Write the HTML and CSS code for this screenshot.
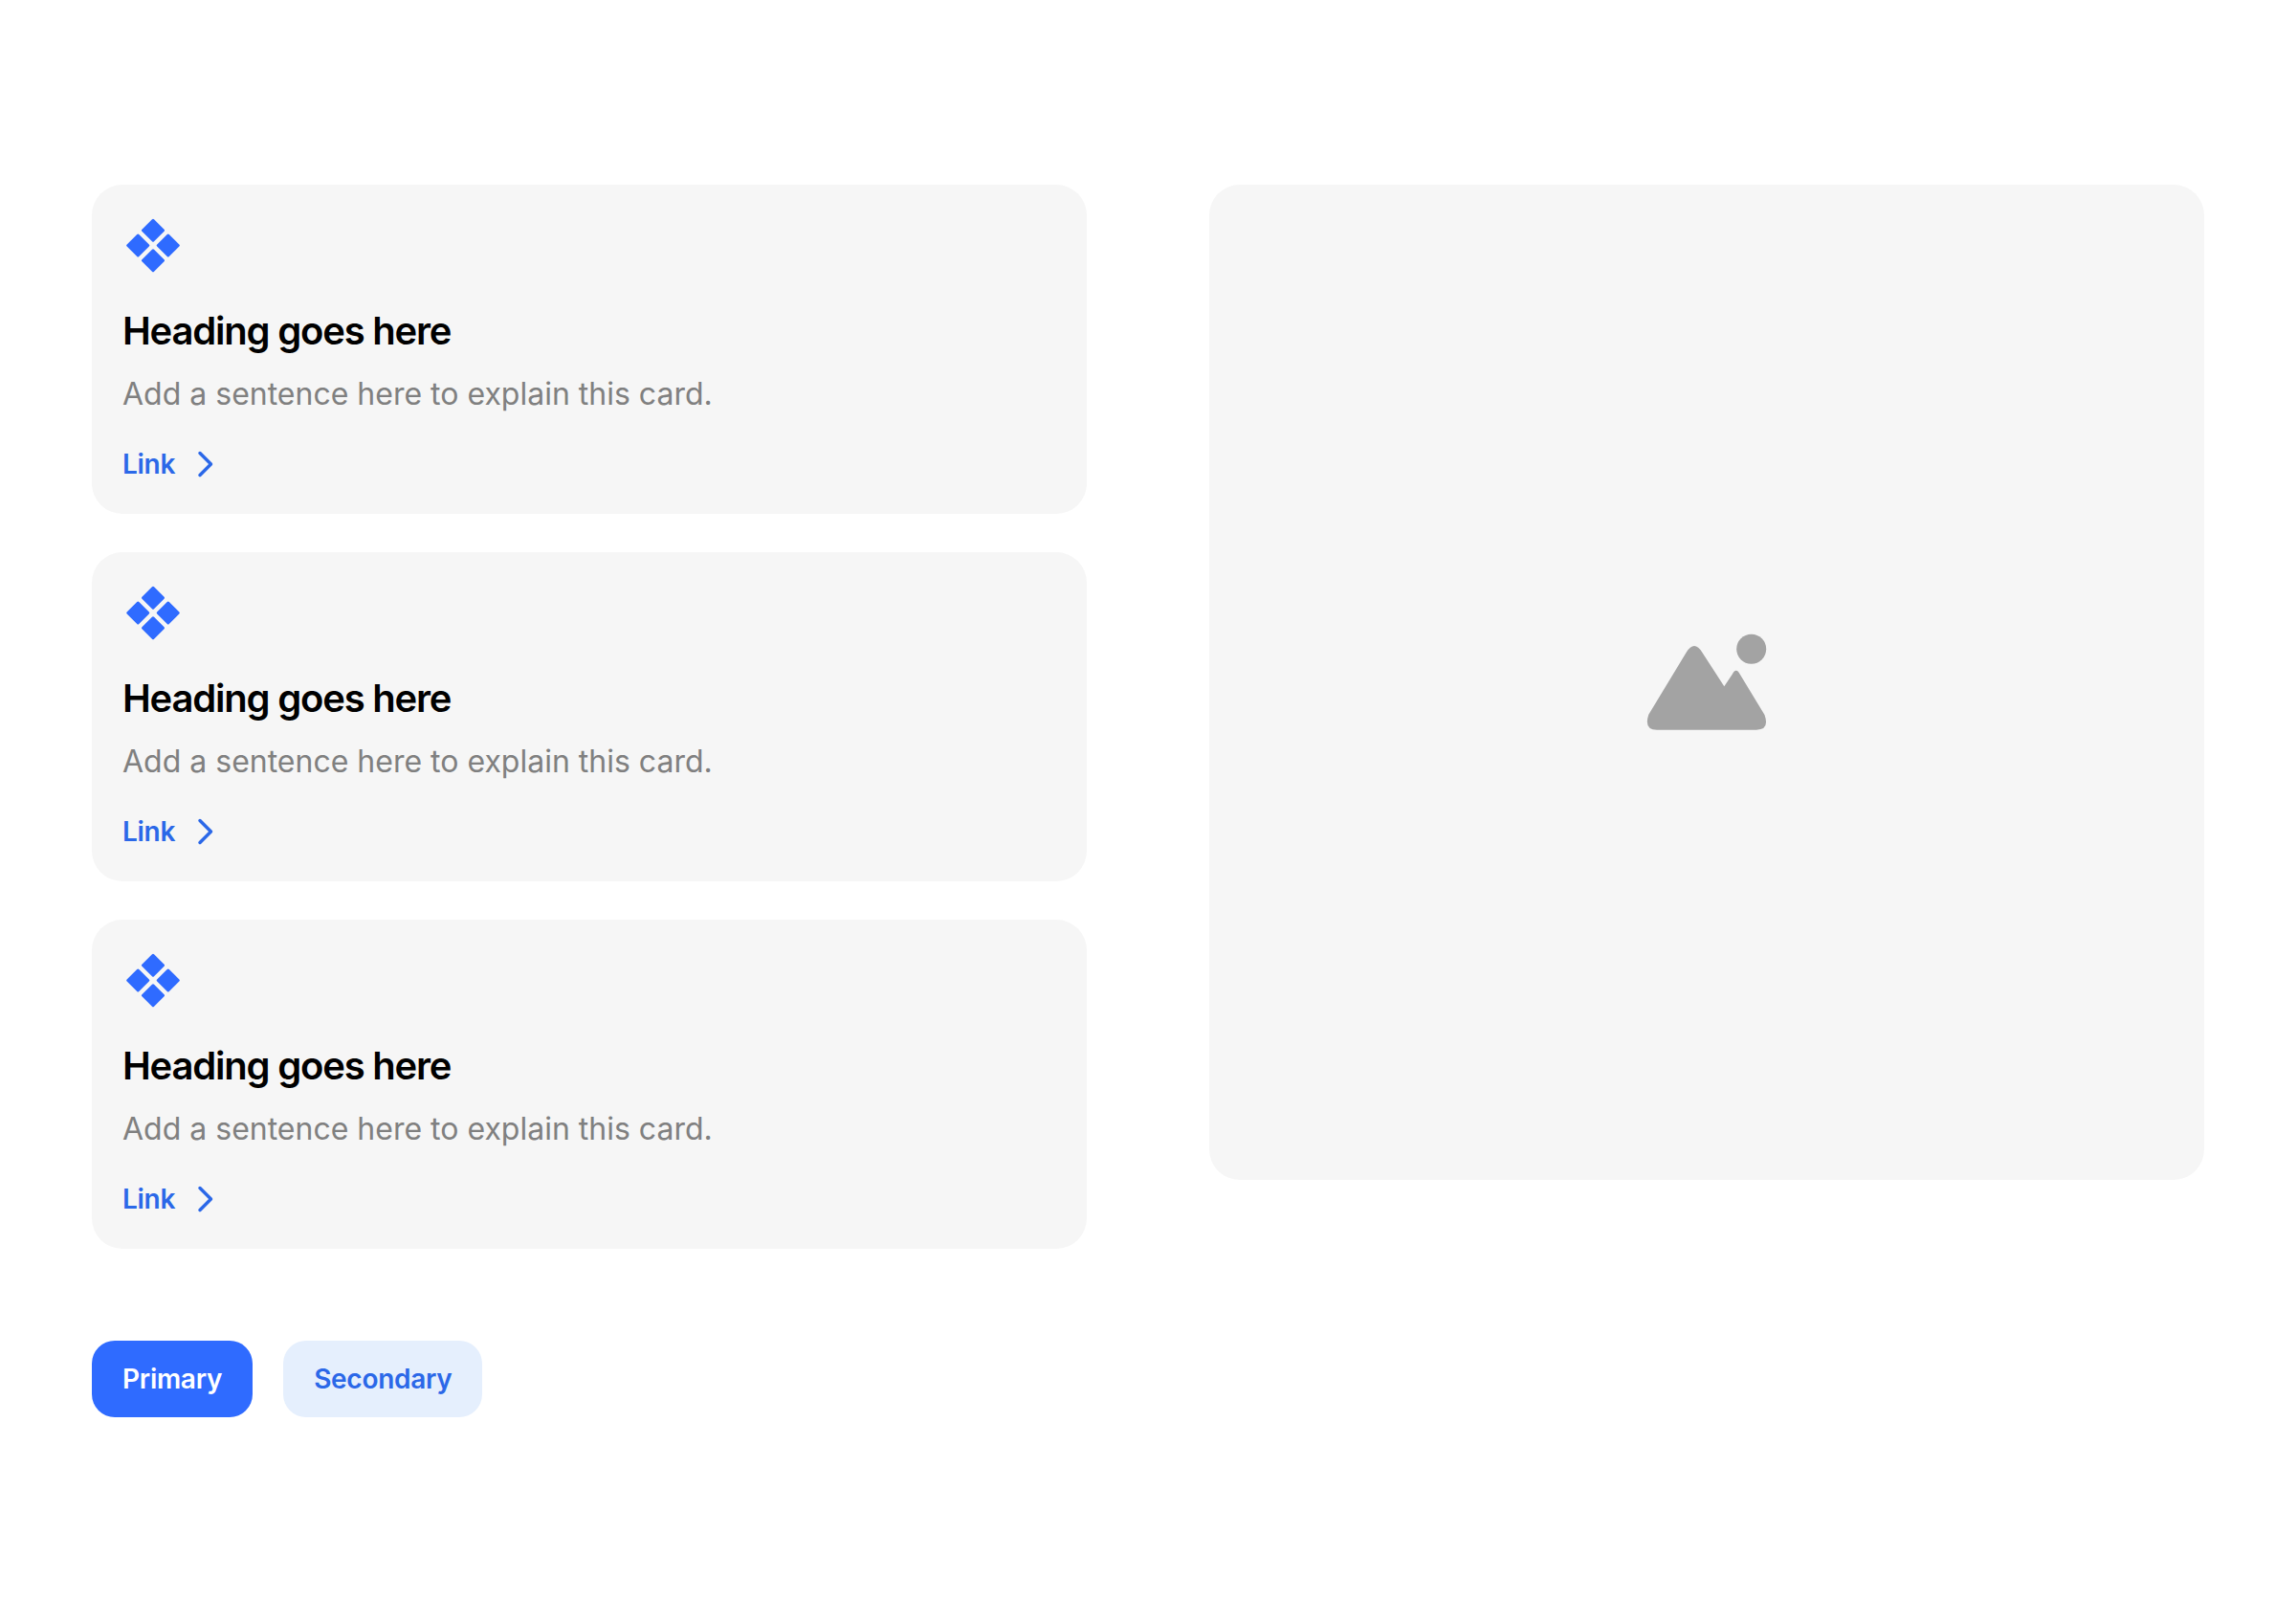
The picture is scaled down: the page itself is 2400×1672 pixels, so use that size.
FILE: index.html
```html
<!DOCTYPE html>
<html lang="en">
<head>
<meta charset="utf-8">
<title>Cards</title>
<link rel="stylesheet" href="styles.css">
</head>
<body>
<main class="page">
  <section class="left">
    <div class="cards">
      <article class="card">
        <svg class="icon" viewBox="0 0 64 64"><path d="M32 5.300 L42.700 16 L32 26.700 L21.300 16Z M48 21.300 L58.700 32 L48 42.700 L37.300 32Z M32 37.300 L42.700 48 L32 58.700 L21.300 48Z M16 21.300 L26.700 32 L16 42.700 L5.300 32Z"/></svg>
        <h2 class="title">Heading goes here</h2>
        <p class="text">Add a sentence here to explain this card.</p>
        <a class="link">Link<svg class="chev" viewBox="0 0 32 32"><path d="M10 4.500 L21.500 16 L10 27.500"/></svg></a>
      </article>
      <article class="card">
        <svg class="icon" viewBox="0 0 64 64"><path d="M32 5.300 L42.700 16 L32 26.700 L21.300 16Z M48 21.300 L58.700 32 L48 42.700 L37.300 32Z M32 37.300 L42.700 48 L32 58.700 L21.300 48Z M16 21.300 L26.700 32 L16 42.700 L5.300 32Z"/></svg>
        <h2 class="title">Heading goes here</h2>
        <p class="text">Add a sentence here to explain this card.</p>
        <a class="link">Link<svg class="chev" viewBox="0 0 32 32"><path d="M10 4.500 L21.500 16 L10 27.500"/></svg></a>
      </article>
      <article class="card">
        <svg class="icon" viewBox="0 0 64 64"><path d="M32 5.300 L42.700 16 L32 26.700 L21.300 16Z M48 21.300 L58.700 32 L48 42.700 L37.300 32Z M32 37.300 L42.700 48 L32 58.700 L21.300 48Z M16 21.300 L26.700 32 L16 42.700 L5.300 32Z"/></svg>
        <h2 class="title">Heading goes here</h2>
        <p class="text">Add a sentence here to explain this card.</p>
        <a class="link">Link<svg class="chev" viewBox="0 0 32 32"><path d="M10 4.500 L21.500 16 L10 27.500"/></svg></a>
      </article>
    </div>
    <div class="actions">
      <a class="btn btn-primary">Primary</a>
      <a class="btn btn-secondary">Secondary</a>
    </div>
  </section>
  <section class="media">
    <svg class="placeholder" viewBox="0 0 128 106">
      <circle cx="110.700" cy="18.300" r="15.500"/>
      <path d="M42.700 21.700 Q51 8.300 59.300 21.700 L82.300 57.300 L90.500 45 Q94.700 36.400 99 45 L124.500 87 Q130 102.700 116 102.700 L12 102.700 Q-2 102.700 3.300 86.700Z"/>
    </svg>
  </section>
</main>
</body>
</html>
```
FILE: styles.css
```css
* { box-sizing: border-box; }
html, body { margin: 0; background: #fff; }
body { font-family: Inter, "Liberation Sans", sans-serif; }
.page {
  display: grid;
  grid-template-columns: 1040px 1040px;
  gap: 128px;
  padding: 193px 96px 0;
  align-items: start;
}
.cards { display: flex; flex-direction: column; gap: 40px; }
.card {
  background: #f6f6f6;
  border-radius: 32px;
  padding: 32px;
  height: 344px;
  display: flex;
  flex-direction: column;
  align-items: flex-start;
}
.icon { width: 64px; height: 64px; fill: #2f6bff; stroke: #2f6bff; stroke-width: 3; stroke-linejoin: round; display: block; }
.title { margin: 34px 0 0; font-size: 40px; line-height: 48px; font-weight: 600; letter-spacing: -1.2px; color: #000; }
.text { margin: 18px 0 0; font-size: 32px; line-height: 48px; font-weight: 400; color: #808080; }
.link { margin-top: 29px; display: flex; align-items: center; gap: 16px; font-size: 28px; line-height: 40px; font-weight: 600; letter-spacing: -0.28px; color: #2b68e8; }
.chev { width: 32px; height: 32px; fill: none; stroke: #2b68e8; stroke-width: 3.5; stroke-linecap: round; stroke-linejoin: round; }
.actions { display: flex; gap: 32px; margin-top: 96px; }
.btn { height: 80px; padding: 0 32px; border-radius: 24px; display: flex; align-items: center; font-size: 28px; font-weight: 600; letter-spacing: -0.28px; }
.btn-primary { background: #2f6bff; color: #fff; }
.btn-secondary { background: #e5effd; color: #2b68e8; }
.media {
  background: #f6f6f6;
  border-radius: 32px;
  height: 1040px;
  display: flex;
  align-items: center;
  justify-content: center;
}
.placeholder { width: 128px; height: 106px; fill: #a3a3a3; display: block; }
```
